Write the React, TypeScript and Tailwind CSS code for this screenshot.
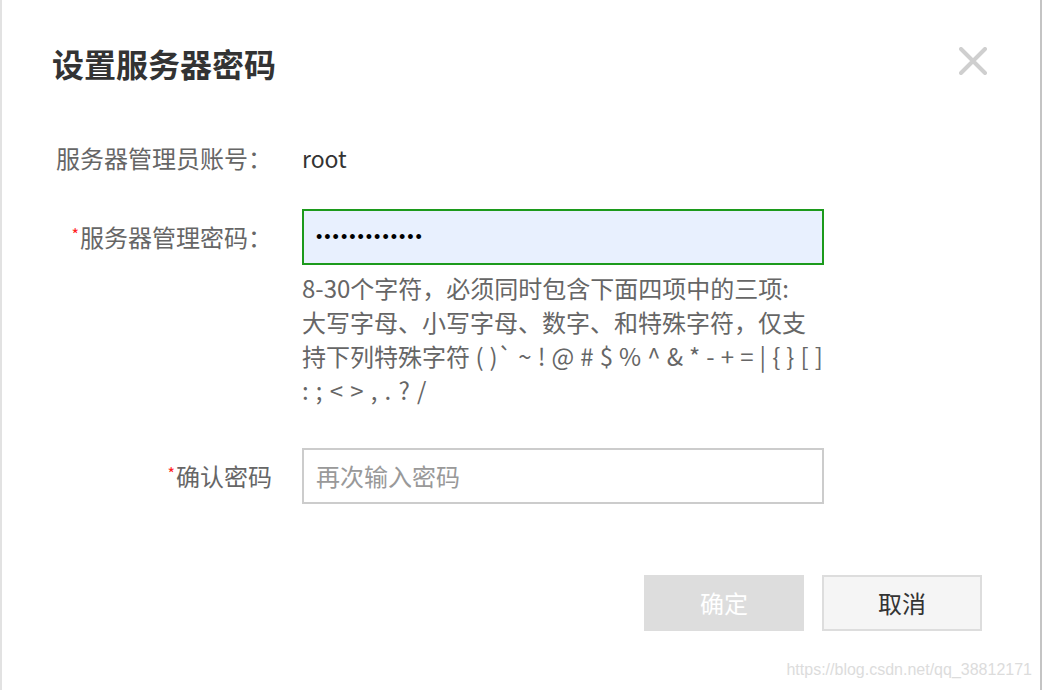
import React from "react";

export default function App() {
  return (
    <div className="relative w-[1042px] h-[690px] bg-white border-l-2 border-l-[#e2e2e2] border-r-2 border-r-[#c4c4c4] font-['Noto_Sans_CJK_SC','Noto_Sans',sans-serif] overflow-hidden">
      {/* header */}
      <div className="mt-[42px] h-[42px] flex items-center justify-between pl-[50px] pr-[53px]">
        <div className="text-[32px] leading-[42px] font-bold text-[#333]">设置服务器密码</div>
        <svg width="28" height="28" viewBox="0 0 28 28" className="-mt-[4px]">
          <path d="M2 2 L26 26 M26 2 L2 26" stroke="#cfcfcf" strokeWidth="4" strokeLinecap="round" />
        </svg>
      </div>

      {/* account row */}
      <div className="mt-[54px] flex items-center h-[40px]">
        <div className="w-[270px] text-right text-[24px] text-[#666] leading-[40px]">服务器管理员账号：</div>
        <div className="ml-[30px] text-[23px] text-[#333] leading-[40px]">root</div>
      </div>

      {/* password row */}
      <div className="mt-[31px] flex items-start">
        <div className="w-[270px] h-[56px] flex items-center justify-end text-[24px] text-[#666]">
          <span className="text-[#ff2020] text-[16px] -mt-[6px] mr-[1px]">*</span>
          <span>服务器管理密码：</span>
        </div>
        <div className="ml-[30px] w-[522px]">
          <div className="h-[56px] border-2 border-[#1c9a1c] bg-[#e8f0fe] flex items-center pl-[12px]">
            <span className="font-['Liberation_Sans',sans-serif] text-[18px] tracking-[2px] text-black leading-none">•••••••••••••</span>
          </div>
          <div className="mt-[6px] text-[24px] leading-[34px] text-[#666] whitespace-nowrap">
            <div>8-30个字符，必须同时包含下面四项中的三项:</div>
            <div>大写字母、小写字母、数字、和特殊字符，仅支</div>
            <div>
              持下列特殊字符 <span className="[word-spacing:0.7px]">( )` ~ ! @ # $ % ^ &amp; * - + = | {"{"} {"}"} [ ]</span>
            </div>
            <div className="[word-spacing:1.8px]">: ; &lt; &gt; , . ? /</div>
          </div>
        </div>
      </div>

      {/* confirm row */}
      <div className="mt-[41px] flex items-center">
        <div className="w-[270px] h-[56px] flex items-center justify-end text-[24px] text-[#666]">
          <span className="text-[#ff2020] text-[16px] -mt-[6px] mr-[1px]">*</span>
          <span>确认密码</span>
        </div>
        <div className="ml-[30px] w-[522px] h-[56px] border-2 border-[#cccccc] bg-white flex items-center pl-[12px]">
          <span className="text-[24px] text-[#999]">再次输入密码</span>
        </div>
      </div>

      {/* buttons */}
      <div className="mt-[71px] flex justify-end pr-[58px] gap-[18px]">
        <div className="w-[160px] h-[56px] bg-[#dddddd] flex items-center justify-center text-[24px] text-white">确定</div>
        <div className="w-[160px] h-[56px] bg-[#f5f5f5] border-2 border-[#dddddd] flex items-center justify-center text-[24px] text-[#333]">取消</div>
      </div>

      {/* watermark */}
      <div className="absolute right-[8px] bottom-[8px] font-['Liberation_Sans',sans-serif] text-[16px] text-[#dcdcdc]">
        https://blog.csdn.net/qq_38812171
      </div>
    </div>
  );
}
